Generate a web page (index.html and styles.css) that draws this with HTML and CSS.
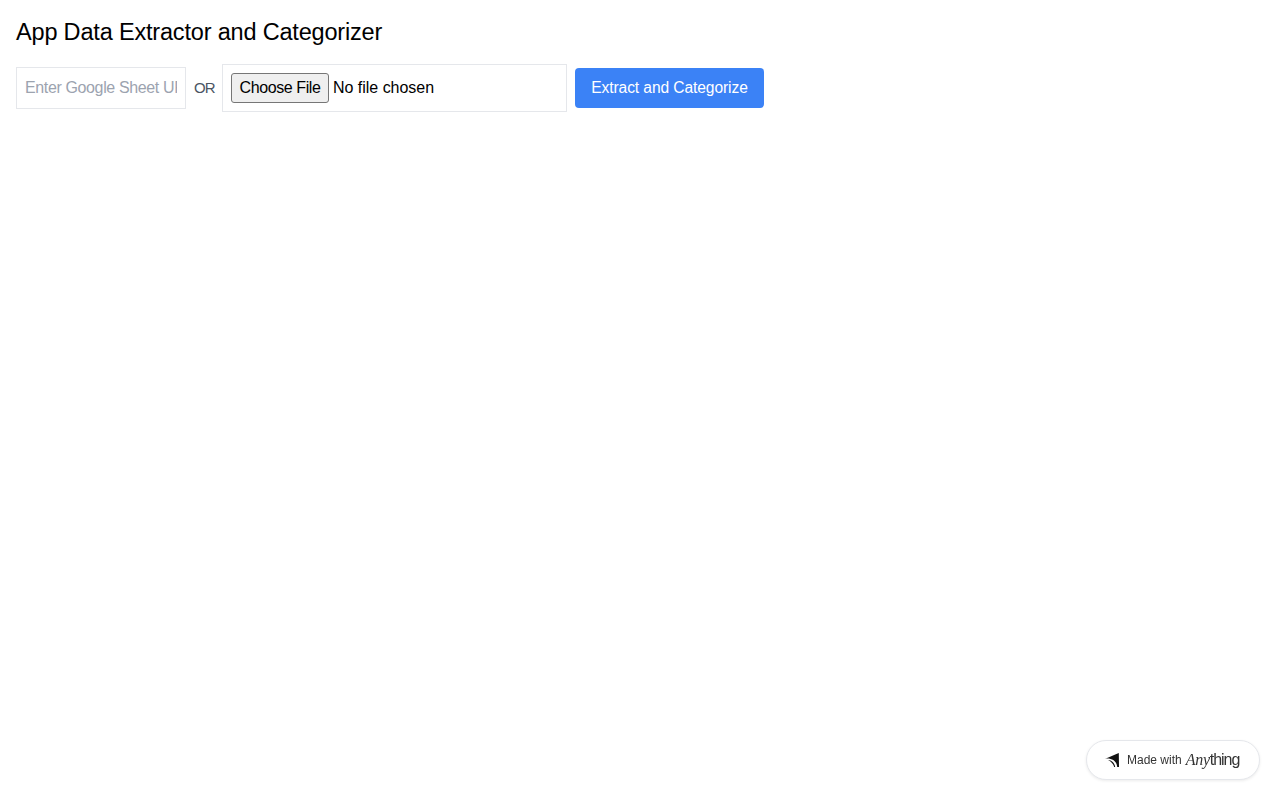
FILE: index.html
```html
<!DOCTYPE html>
<html lang="en">
<head>
  <meta charset="UTF-8" />
  <meta name="viewport" content="width=device-width, initial-scale=1" />
  <title>App Data Extractor and Categorizer</title>
  <link rel="stylesheet" href="styles.css">
</head>
<body>
  <main class="page">
    <h1 class="title">App Data Extractor and Categorizer</h1>
    <form class="source-form">
      <input class="url-input" type="text" name="sheet-url" placeholder="Enter Google Sheet URL" />
      <span class="or-label">OR</span>
      <input class="file-input" type="file" name="sheet-file" />
      <button class="submit-btn" type="button">Extract and Categorize</button>
    </form>
  </main>

  <!-- Floating badge -->
  <a class="made-with" href="#">
    <svg class="made-with-icon" width="14" height="14" viewBox="0 0 14 14" aria-hidden="true">
      <path d="M0 5.8 C4.5 4.2 9 2 13.8 0 L14 14 L12.2 14 C12 10.2 9.6 6.8 5.6 5.9 C3.6 5.5 1.6 5.5 0 5.8 Z" fill="#111" />
      <path d="M3 7 C6.6 7.2 9.6 10 10.2 14 L9.2 14 C8.4 11 6.2 8.6 3 7 Z" fill="#111" />
    </svg>
    <span class="made-with-text">Made with</span>
    <span class="made-with-name"><em class="name-any">Any</em>thing</span>
  </a>
</body>
</html>
```

FILE: styles.css
```css
/* Base styles */
body {
  margin: 0;
  background: #fff;
  color: #000;
  font-family: "Liberation Sans", Arial, sans-serif;
}
.page {
  padding: 16px;
}
.title {
  margin: 0 0 16px;
  font-size: 23.5px;
  line-height: 32px;
  font-weight: 400;
  letter-spacing: -0.18px;
}
/* Source row */
.source-form {
  display: flex;
  align-items: center;
  gap: 8px;
}
.url-input {
  width: 170px;
  height: 42px;
  padding: 8px;
  border: 1px solid #e5e7eb;
  box-sizing: border-box;
  font-family: inherit;
  font-size: 16px;
  letter-spacing: -0.37px;
  outline: none;
}
.url-input::placeholder {
  color: #9ca3af;
}
.or-label {
  flex: none;
  width: 20px;
  font-size: 15px;
  line-height: 24px;
  letter-spacing: -1px;
  color: #4b5563;
}
.file-input {
  width: 345px;
  height: 48px;
  padding: 8px;
  border: 1px solid #e5e7eb;
  box-sizing: border-box;
  font-family: inherit;
  font-size: 16px;
  letter-spacing: -0.02px;
}
.file-input::file-selector-button {
  width: 98px;
  height: 30px;
  padding: 1px 0;
  border: 1px solid #767676;
  border-radius: 3px;
  background: #efefef;
  font: inherit;
  letter-spacing: -0.4px;
}
.submit-btn {
  width: 189px;
  height: 40px;
  padding: 8px 0;
  border: none;
  border-radius: 4px;
  background: #3b82f6;
  color: #fff;
  font-family: inherit;
  font-size: 15.6px;
  line-height: 24px;
  letter-spacing: -0.1px;
  cursor: pointer;
}
/* Made with badge */
.made-with {
  position: fixed;
  right: 20px;
  bottom: 20px;
  display: flex;
  align-items: center;
  width: 174px;
  height: 40px;
  padding-left: 18px;
  box-sizing: border-box;
  border: 1px solid #e5e7eb;
  border-radius: 20px;
  background: #fff;
  box-shadow: 0 1px 3px rgba(0, 0, 0, 0.08);
  color: #333;
  text-decoration: none;
}
.made-with-icon {
  flex: none;
  margin-right: 8px;
}
.made-with-text {
  font-size: 12px;
  margin-right: 4px;
}
.made-with-name {
  font-size: 16px;
  letter-spacing: -1px;
  color: #333;
}
.name-any {
  font-family: "Liberation Serif", "Times New Roman", serif;
  font-size: 16px;
  font-style: italic;
  letter-spacing: -0.3px;
}
```
